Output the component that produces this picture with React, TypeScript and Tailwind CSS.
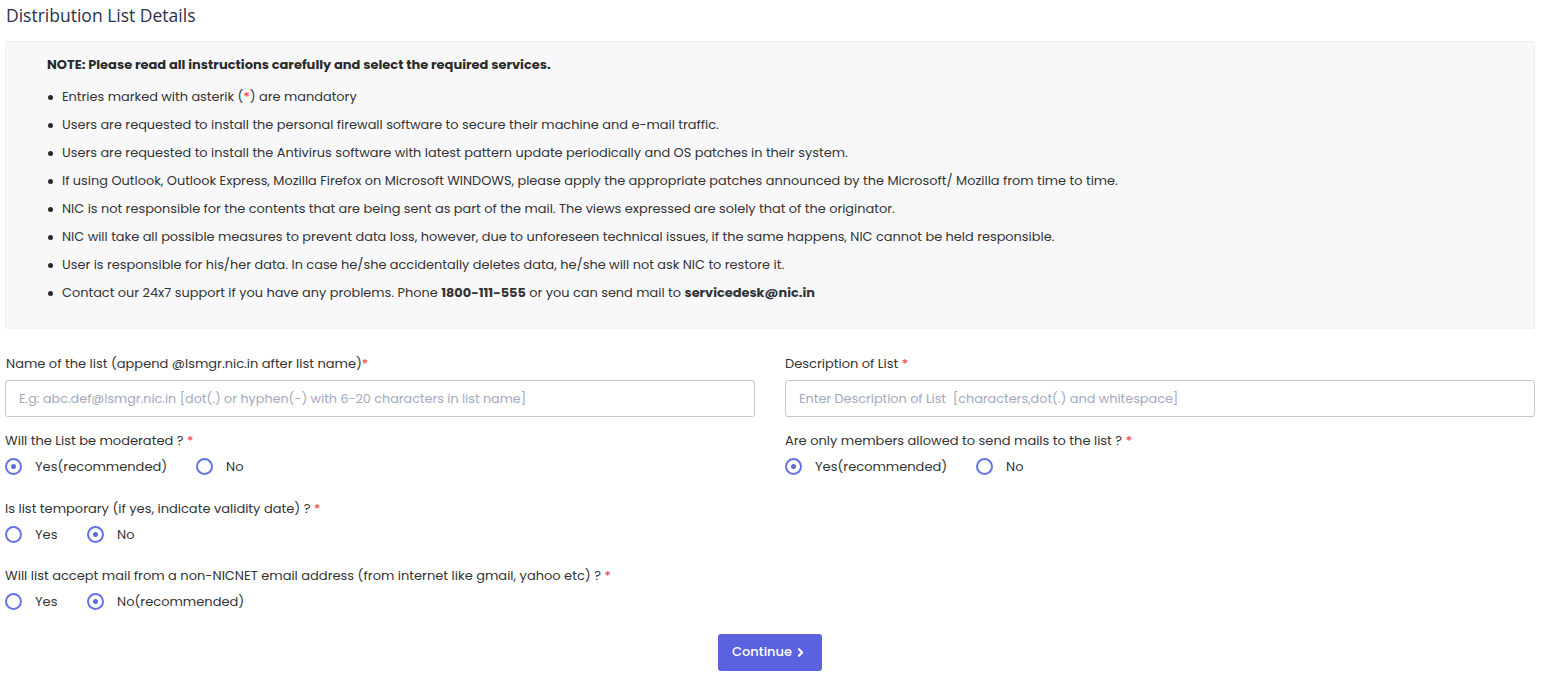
import { ChevronRight } from 'lucide-react'

const font = "font-['Poppins','Noto_Sans','DejaVu_Sans',sans-serif]"

const notes: React.ReactNode[] = [
  <>Entries marked with asterik (<span className="text-red-500">*</span>) are mandatory</>,
  'Users are requested to install the personal firewall software to secure their machine and e-mail traffic.',
  'Users are requested to install the Antivirus software with latest pattern update periodically and OS patches in their system.',
  'If using Outlook, Outlook Express, Mozilla Firefox on Microsoft WINDOWS, please apply the appropriate patches announced by the Microsoft/ Mozilla from time to time.',
  'NIC is not responsible for the contents that are being sent as part of the mail. The views expressed are solely that of the originator.',
  'NIC will take all possible measures to prevent data loss, however, due to unforeseen technical issues, if the same happens, NIC cannot be held responsible.',
  'User is responsible for his/her data. In case he/she accidentally deletes data, he/she will not ask NIC to restore it.',
  <>Contact our 24x7 support if you have any problems. Phone <b className="font-bold">1800-111-555</b> or you can send mail to <b className="font-bold">servicedesk@nic.in</b></>,
]

function Radio({ label, checked, gap = 'w-[162px]' }: { label: string; checked?: boolean; gap?: string }) {
  return (
    <label className={`flex items-center ${gap}`}>
      <span className="w-[17px] h-[17px] rounded-full border-2 border-[#6373e8] flex items-center justify-center shrink-0">
        {checked && <span className="w-[5px] h-[5px] rounded-full bg-[#5a6be0]" />}
      </span>
      <span className="ml-[13px] text-[13px] text-[#333]">{label}</span>
    </label>
  )
}

function Question({ q, children }: { q: string; children: React.ReactNode }) {
  return (
    <div>
      <p className="text-[13px] text-[#333] leading-[20px]">
        {q} <span className="text-red-500">*</span>
      </p>
      <div className="flex items-center mt-[6px]">{children}</div>
    </div>
  )
}

export default function App() {
  return (
    <div className={`bg-white w-[1541px] h-[679px] px-[5px] ${font}`}>
      <h2 className="font-['Open_Sans',sans-serif] font-medium text-[17.5px] text-[#2c3147] pt-[4px] leading-[22px] pl-px">
        Distribution List Details
      </h2>

      {/* Notes */}
      <div className="mt-[15px] w-[1530px] h-[288px] bg-[#f8f8fa] border border-[#f0f0f4] rounded-[3px] pl-[41px] pt-[14px]">
        <p className="text-[13px] font-bold text-[#2b2b2b] leading-[18px]">
          NOTE: Please read all instructions carefully and select the required services.
        </p>
        <ul className="mt-[9px]">
          {notes.map((n, i) => (
            <li key={i} className="flex items-center h-[28px] text-[12.9px] text-[#333]">
              <span className="w-[5px] h-[5px] rounded-full bg-[#2b2b2b] ml-[1px] mr-[9px] shrink-0" />
              <span>{n}</span>
            </li>
          ))}
        </ul>
      </div>

      {/* Form */}
      <div className="grid grid-cols-2 gap-x-[30px] w-[1530px] mt-[25px]">
        <div>
          <p className="text-[13px] text-[#333] leading-[20px] pl-px">
            Name of the list (append @lsmgr.nic.in after list name)<span className="text-red-500">*</span>
          </p>
          <input
            className="mt-[6px] w-full h-[37px] border border-[#c5c8d6] rounded-[3px] px-[13px] text-[12.75px] placeholder:text-[#a4a9c0] outline-none"
            placeholder="E.g: abc.def@lsmgr.nic.in [dot(.) or hyphen(-) with 6-20 characters in list name]"
          />
        </div>
        <div>
          <p className="text-[13px] text-[#333] leading-[20px]">
            Description of List <span className="text-red-500">*</span>
          </p>
          <input
            className="mt-[6px] w-full h-[37px] border border-[#c5c8d6] rounded-[3px] px-[13px] text-[12.8px] placeholder:text-[#a4a9c0] outline-none"
            placeholder="Enter Description of List  [characters,dot(.) and whitespace]"
          />
        </div>

        <div className="mt-[14px]">
          <Question q="Will the List be moderated ?">
            <Radio label="Yes(recommended)" checked gap="w-[191px]" />
            <Radio label="No" />
          </Question>
        </div>
        <div className="mt-[14px]">
          <Question q="Are only members allowed to send mails to the list ?">
            <Radio label="Yes(recommended)" checked gap="w-[191px]" />
            <Radio label="No" />
          </Question>
        </div>

        <div className="mt-[22px] col-span-2">
          <Question q="Is list temporary (if yes, indicate validity date) ?">
            <Radio label="Yes" gap="w-[82px]" />
            <Radio label="No" checked />
          </Question>
        </div>

        <div className="mt-[22px] col-span-2">
          <Question q="Will list accept mail from a non-NICNET email address (from internet like gmail, yahoo etc) ?">
            <Radio label="Yes" gap="w-[82px]" />
            <Radio label="No(recommended)" checked />
          </Question>
        </div>
      </div>

      <div className="flex justify-center mt-[22px] pr-[2px]">
        <button className="h-[37px] w-[104px] bg-[#5a62e0] rounded-[3px] text-white text-[13px] font-medium flex items-center justify-center gap-[2px]">
          Continue
          <ChevronRight size={13} strokeWidth={4} />
        </button>
      </div>
    </div>
  )
}
